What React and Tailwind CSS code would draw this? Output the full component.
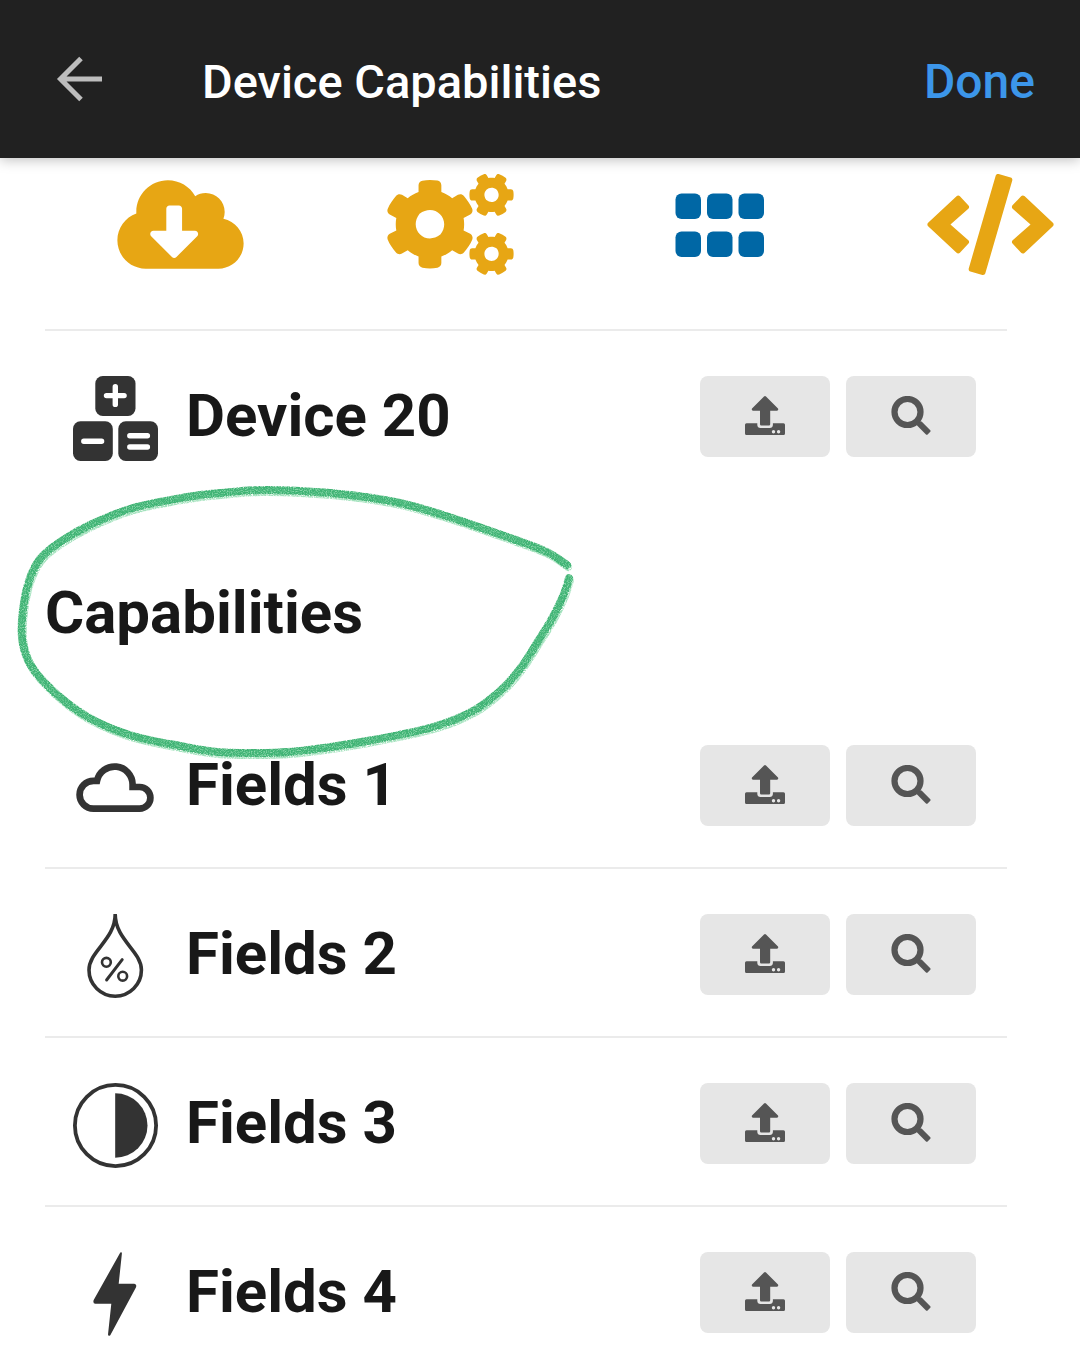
import React, { useState } from 'react';
import { FaCloudDownloadAlt, FaCode, FaCogs } from 'react-icons/fa';

const GridIcon = () => (
    <svg viewBox="0 0 127 101" className="h-[101px] w-[127px]" fill="currentColor">
        {[18.5, 50, 81.5].map((x) => (
            <g key={x}>
                <rect x={x} y="19.5" width="25.5" height="25.5" rx="6" />
                <rect x={x} y="57.5" width="25.5" height="25.5" rx="6" />
            </g>
        ))}
    </svg>
);

const BackIcon = () => (
    <svg viewBox="0 0 46 46" className="h-[46px] w-[46px]" fill="none" stroke="currentColor" strokeWidth="5">
        <path d="M25 2.5 4.5 23 25 43.5M4 23h42" />
    </svg>
);

const UploadIcon = () => (
    <svg viewBox="0 0 40 40" className="size-10" fill="currentColor">
        <path d="M19 .5Q20 -.3 21 .5L33 12.6Q33.8 14.5 32 14.7H25.2V28.2Q25.2 29.5 24 29.5H16.2Q15 29.5 15 28.2V14.7H8Q6.2 14.5 7 12.6Z" />
        <path
            fillRule="evenodd"
            d="M1.5 27.2H12.3V29Q12.5 32 15.5 32H24.7Q27.7 32 27.9 29V27.2H38.5Q40 27.2 40 28.7V37.5Q40 39 38.5 39H1.5Q0 39 0 37.5V28.7Q0 27.2 1.5 27.2ZM28.5 34a1.7 1.7 0 1 0 0 3.4a1.7 1.7 0 1 0 0-3.4M33.6 34a1.7 1.7 0 1 0 0 3.4a1.7 1.7 0 1 0 0-3.4"
        />
    </svg>
);

const SearchIcon = () => (
    <svg viewBox="0 0 40 40" className="size-10" fill="none" stroke="currentColor">
        <circle cx="16.5" cy="16" r="13" strokeWidth="6.2" />
        <path d="m26 25.5 3 3" strokeWidth="4.5" />
        <path d="M29.8 26.8 27.6 29l8.2 8.2 2.2-2.2Z" strokeWidth="3" strokeLinejoin="round" fill="currentColor" />
    </svg>
);

const DeviceIcon = () => (
    <svg viewBox="0 0 85 85" className="size-[85px]">
        <g fill="currentColor">
            <rect x="22.3" y="0" width="40.2" height="40" rx="7.5" />
            <rect x="0" y="45.3" width="39.8" height="39.7" rx="7.5" />
            <rect x="45.3" y="45.3" width="39.7" height="39.7" rx="7.5" />
        </g>
        <g stroke="white" strokeWidth="5.4" strokeLinecap="round">
            <path d="M33.5 19.6h17.6M42.3 10.8v17.6M10.8 65.2h17.8M56.8 59.7h17.6M56.8 71h17.6" />
        </g>
    </svg>
);

const CloudIcon = () => (
    <svg viewBox="0 0 85 85" className="size-[85px]" fill="none" stroke="currentColor" strokeWidth="6.7">
        <path d="M20.5 63.6A13.9 13.9 0 0 1 20.5 35.8L24 35.8A18 18 0 0 1 59.6 39.4V42H66.6A10.7 10.7 0 0 1 66.6 63.6Z" />
    </svg>
);

const HumidityIcon = () => (
    <svg viewBox="0 0 85 85" className="size-[85px]" fill="none" stroke="currentColor" strokeWidth="3.6">
        <path d="M42.2 0C42.2 26 16 37 16 56A26.2 26.2 0 0 0 68.4 56C68.4 37 42.2 26 42.2 0" />
        <circle cx="33.4" cy="48.3" r="4.4" strokeWidth="2.6" />
        <circle cx="49.7" cy="62.2" r="4.4" strokeWidth="2.6" />
        <path d="M33.6 66 49.2 45.6" strokeWidth="3" strokeLinecap="round" />
    </svg>
);

const ContrastIcon = () => (
    <svg viewBox="0 0 85 85" className="size-[85px]">
        <circle cx="42.5" cy="42.5" r="40.6" fill="none" stroke="currentColor" strokeWidth="3.8" />
        <path d="M42.2 10.2A32.3 32.3 0 0 1 42.2 74.8Z" fill="currentColor" />
    </svg>
);

const BoltIcon = () => (
    <svg viewBox="0 0 85 85" className="size-[85px]" fill="currentColor">
        <path d="M47.3.5Q49 -.4 48.9 1.6L45.7 31.7H61.3Q64.2 32.2 62.9 35.5L37.3 83.2Q35.3 84.8 35 82.5L38.3 51.7H22.3Q19.6 51.2 20.7 48Z" />
    </svg>
);

const tabs = [
    { id: 'downloads', label: 'Downloads', icon: <FaCloudDownloadAlt className="h-[101px] w-[127px]" /> },
    { id: 'settings', label: 'Settings', icon: <FaCogs className="h-[101px] w-[127px]" /> },
    { id: 'capabilities', label: 'Capabilities', icon: <GridIcon /> },
    { id: 'code', label: 'Code', icon: <FaCode className="h-[101px] w-[127px]" /> },
];

const fields = [
    { name: 'Fields 1', icon: <CloudIcon /> },
    { name: 'Fields 2', icon: <HumidityIcon /> },
    { name: 'Fields 3', icon: <ContrastIcon /> },
    { name: 'Fields 4', icon: <BoltIcon /> },
];

const ActionButton = ({ label, children }) => (
    <button
        type="button"
        aria-label={label}
        className="flex h-[81px] w-[130px] items-center justify-center rounded-lg bg-[#e6e6e6] pb-0.5 text-[#555555]"
    >
        {children}
    </button>
);

const ItemRow = ({ name, icon }) => (
    <div className="flex items-start pt-[45px] pr-[31px] pl-7">
        <span className="shrink-0 text-[#333333]">{icon}</span>
        <h2 className="ml-7 flex-1 text-[60px] leading-[80px] font-bold">{name}</h2>
        <div className="flex gap-4">
            <ActionButton label={`Upload ${name}`}>
                <UploadIcon />
            </ActionButton>
            <ActionButton label={`Search ${name}`}>
                <SearchIcon />
            </ActionButton>
        </div>
    </div>
);

const loopPoints = [
    [567, 565], [547, 552], [513, 539], [490, 531], [443, 515], [400, 503], [350, 495], [300, 491],
    [260, 490], [220, 493], [187, 497], [133, 508], [90, 525], [60, 542], [40, 559], [29, 581],
    [23, 610], [22, 637], [28, 660], [42, 680], [67, 703], [95, 721], [133, 736], [180, 746],
    [217, 752], [260, 753], [300, 751], [367, 741], [433, 727], [473, 711], [500, 691], [520, 669],
    [537, 643], [553, 617], [564, 594], [569, 578],
];

// Catmull-Rom spline through the points, written as cubic segments
const toSmoothPath = (points) => {
    let d = `M${points[0][0]} ${points[0][1]}`;
    for (let i = 0; i < points.length - 1; i++) {
        const p0 = points[i - 1] || points[i];
        const p1 = points[i];
        const p2 = points[i + 1];
        const p3 = points[i + 2] || p2;
        d += `C${p1[0] + (p2[0] - p0[0]) / 6} ${p1[1] + (p2[1] - p0[1]) / 6}`;
        d += ` ${p2[0] - (p3[0] - p1[0]) / 6} ${p2[1] - (p3[1] - p1[1]) / 6} ${p2[0]} ${p2[1]}`;
    }
    return d;
};

const loopPath = toSmoothPath(loopPoints);

// Hand drawn marker loop around the section title
const MarkerLoop = () => (
    <svg
        viewBox="0 478 580 290"
        className="pointer-events-none absolute -top-[105px] -left-[45px] h-[290px] w-[580px] max-w-none"
        fill="none"
        strokeLinecap="round"
        aria-hidden="true"
    >
        <defs>
            <filter id="chalk" filterUnits="userSpaceOnUse" x="0" y="478" width="580" height="290">
                <feTurbulence type="fractalNoise" baseFrequency="0.95" numOctaves="2" seed="4" result="noise" />
                <feColorMatrix in="noise" type="matrix" values="0 0 0 0 0  0 0 0 0 0  0 0 0 0 0  3 0 0 0 -0.7" result="grain" />
                <feGaussianBlur in="SourceGraphic" stdDeviation="0.7" result="soft" />
                <feComposite in="soft" in2="grain" operator="in" />
            </filter>
        </defs>
        <path d={loopPath} stroke="#8ad8ab" strokeWidth="7" />
        <g filter="url(#chalk)">
            <path d={loopPath} transform="translate(1 2)" stroke="#a3e2bd" strokeWidth="8" />
            <path d={loopPath} stroke="#41b374" strokeWidth="8" />
        </g>
    </svg>
);

export default function App() {
    const [activeTab, setActiveTab] = useState('capabilities');

    return (
        <div className="min-h-screen overflow-hidden bg-white font-[Roboto,sans-serif] text-[#181818]">
            <header className="relative flex h-[158px] items-center bg-[#212121] px-[45px] pt-1.5 shadow-[0_2px_12px_rgba(0,0,0,0.25)]">
                <button type="button" aria-label="Back" className="-mt-1.5 ml-[11px] text-[#bdbdbd]">
                    <BackIcon />
                </button>
                <h1 className="ml-[100px] flex-1 text-[47px] leading-[48px] font-medium text-white">Device Capabilities</h1>
                <button type="button" className="text-5xl font-medium text-[#3c96ea]">
                    Done
                </button>
            </header>

            <nav className="ml-[45px] flex w-full pt-4 pb-[54px]">
                {tabs.map((tab) => (
                    <button
                        key={tab.id}
                        type="button"
                        aria-label={tab.label}
                        onClick={() => setActiveTab(tab.id)}
                        className={`flex w-1/4 shrink-0 justify-center ${
                            activeTab === tab.id ? 'text-[#0067a5]' : 'text-[#e7a614]'
                        }`}
                    >
                        {tab.icon}
                    </button>
                ))}
            </nav>

            <main className="mr-[73px] ml-[45px]">
                <section className="border-t-2 border-[#ebebeb]">
                    <ItemRow name="Device 20" icon={<DeviceIcon />} />
                </section>

                <div className="relative mt-[122px] mb-[57px]">
                    <h2 className="text-[60px] leading-[60px] font-bold">Capabilities</h2>
                    <MarkerLoop />
                </div>

                <ul>
                    {fields.map((field) => (
                        <li key={field.name} className="border-b-2 border-[#ebebeb] pb-[37px] last:border-0 last:pb-0">
                            <ItemRow name={field.name} icon={field.icon} />
                        </li>
                    ))}
                </ul>
            </main>
        </div>
    );
}
